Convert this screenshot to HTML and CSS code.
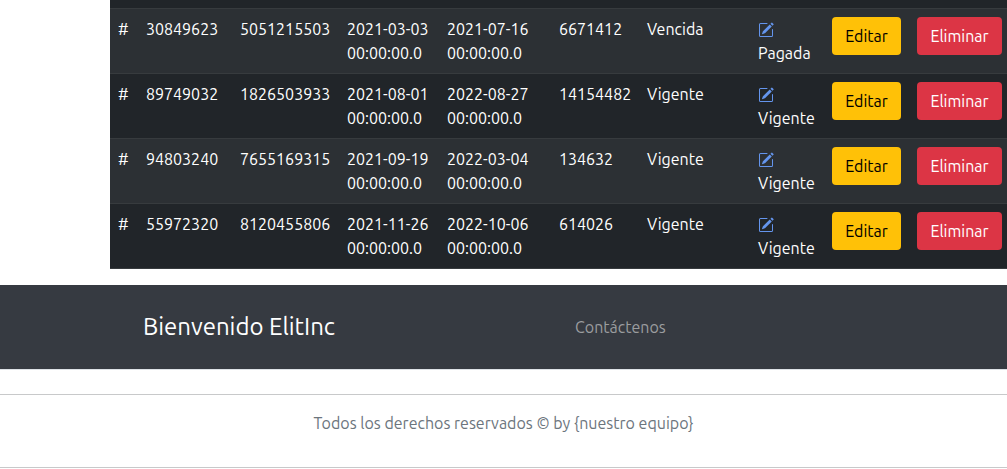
FILE: index.html
```
<!DOCTYPE html>
<html lang="es">
<head>
<meta charset="utf-8">
<meta name="viewport" content="width=device-width, initial-scale=1">
<title>ElitInc</title>
<link rel="stylesheet" href="styles.css">
</head>
<body>
<svg class="sprite" aria-hidden="true">
  <symbol id="pencil-square" viewBox="0 0 16 16">
    <path d="M15.502 1.94a.5.5 0 0 1 0 .706L14.459 3.69l-2-2L13.502.646a.5.5 0 0 1 .707 0l1.293 1.293zm-1.75 2.456-2-2L4.939 9.21a.5.5 0 0 0-.121.196l-.805 2.414a.25.25 0 0 0 .316.316l2.414-.805a.5.5 0 0 0 .196-.12l6.813-6.814z"/>
    <path fill-rule="evenodd" d="M1 13.5A1.5 1.5 0 0 0 2.5 15h11a1.5 1.5 0 0 0 1.5-1.5v-6a.5.5 0 0 0-1 0v6a.5.5 0 0 1-.5.5h-11a.5.5 0 0 1-.5-.5v-11a.5.5 0 0 1 .5-.5H9a.5.5 0 0 0 0-1H2.500A1.500 1.500 0 0 0 1 2.500v11z"/>
  </symbol>
</svg>
<main class="content">
  <table class="table">
    <colgroup>
      <col class="col-mark"><col class="col-id"><col class="col-number"><col class="col-date"><col class="col-due"><col class="col-amount"><col class="col-status"><col class="col-payment"><col class="col-edit"><col class="col-delete">
    </colgroup>
    <tbody>
      <tr class="row-edge"><td colspan="10"></td></tr>
      <tr>
        <td>#</td><td>30849623</td><td>5051215503</td><td>2021-03-03 00:00:00.0</td><td>2021-07-16 00:00:00.0</td><td>6671412</td><td>Vencida</td>
        <td><a class="edit-link" href="#" aria-label="Cambiar estado"><svg class="icon"><use href="#pencil-square"/></svg></a> Pagada</td>
        <td><button class="btn btn-warning" type="button">Editar</button></td><td><button class="btn btn-danger" type="button">Eliminar</button></td>
      </tr>
      <tr>
        <td>#</td><td>89749032</td><td>1826503933</td><td>2021-08-01 00:00:00.0</td><td>2022-08-27 00:00:00.0</td><td>14154482</td><td>Vigente</td>
        <td><a class="edit-link" href="#" aria-label="Cambiar estado"><svg class="icon"><use href="#pencil-square"/></svg></a> Vigente</td>
        <td><button class="btn btn-warning" type="button">Editar</button></td><td><button class="btn btn-danger" type="button">Eliminar</button></td>
      </tr>
      <tr>
        <td>#</td><td>94803240</td><td>7655169315</td><td>2021-09-19 00:00:00.0</td><td>2022-03-04 00:00:00.0</td><td>134632</td><td>Vigente</td>
        <td><a class="edit-link" href="#" aria-label="Cambiar estado"><svg class="icon"><use href="#pencil-square"/></svg></a> Vigente</td>
        <td><button class="btn btn-warning" type="button">Editar</button></td><td><button class="btn btn-danger" type="button">Eliminar</button></td>
      </tr>
      <tr>
        <td>#</td><td>55972320</td><td>8120455806</td><td>2021-11-26 00:00:00.0</td><td>2022-10-06 00:00:00.0</td><td>614026</td><td>Vigente</td>
        <td><a class="edit-link" href="#" aria-label="Cambiar estado"><svg class="icon"><use href="#pencil-square"/></svg></a> Vigente</td>
        <td><button class="btn btn-warning" type="button">Editar</button></td><td><button class="btn btn-danger" type="button">Eliminar</button></td>
      </tr>
    </tbody>
  </table>
</main>
<footer>
  <div class="footer-bar">
    <h2 class="footer-title">Bienvenido ElitInc</h2>
    <a class="footer-link" href="#">Contáctenos</a>
  </div>
  <hr class="rule">
  <p class="copyright">Todos los derechos reservados © by {nuestro equipo}</p>
  <hr class="rule">
</footer>
</body>
</html>
```
FILE: styles.css
```
* {
  box-sizing: border-box;
}

body {
  margin: 0;
  overflow-x: hidden;
  background: #fff;
  color: #212529;
  font: 16px/24px Ubuntu, "Noto Sans", sans-serif;
}

.sprite {
  display: none;
}

.content {
  padding-left: 110px;
  margin-bottom: 16px;
}

.table {
  width: 100%;
  min-width: 900px;
  table-layout: fixed;
  border-collapse: separate;
  border-spacing: 0;
  background: #212529;
  color: #fff;
}

.col-mark { width: 28px; }
.col-id { width: 94px; }
.col-number { width: 107px; }
.col-date { width: 100px; }
.col-due { width: 112px; }
.col-amount { width: 88px; }
.col-status { width: 111px; }
.col-payment { width: 74px; }
.col-edit { width: 85px; }
.col-delete { width: 101px; }

.table td {
  padding: 8px;
  border-bottom: 1px solid #373b3e;
  vertical-align: top;
}

.table tr:nth-child(even) {
  background: #2c3034;
}

.table .row-edge td {
  height: 9px;
  padding: 0;
}

.edit-link {
  color: #6495ed;
}

.icon {
  display: inline-block;
  width: 16px;
  height: 16px;
  fill: currentColor;
  vertical-align: -3px;
}

.btn {
  display: block;
  width: 100%;
  height: 38px;
  padding: 0;
  border: 0;
  border-radius: 4px;
  font: inherit;
  cursor: pointer;
}

.btn-warning {
  background: #ffc107;
  color: #000;
}

.btn-danger {
  background: #dc3545;
  color: #fff;
}

.footer-bar {
  display: grid;
  grid-template-columns: 1fr 1fr;
  align-items: center;
  padding: 26px 0 26px 143px;
  border-bottom: 1px solid #dee2e6;
  background: #363a41;
}

.footer-title {
  margin: 0;
  color: #fff;
  font-size: 24px;
  font-weight: 400;
  line-height: 32px;
}

.footer-link {
  justify-self: start;
  color: #9b9d9f;
  text-decoration: none;
}

.rule {
  height: 1px;
  margin: 24px 0 16px;
  border: 0;
  background: #c8c9ca;
}

.copyright {
  margin: 0;
  padding-bottom: 8px;
  color: #6c757d;
  text-align: center;
}
```
